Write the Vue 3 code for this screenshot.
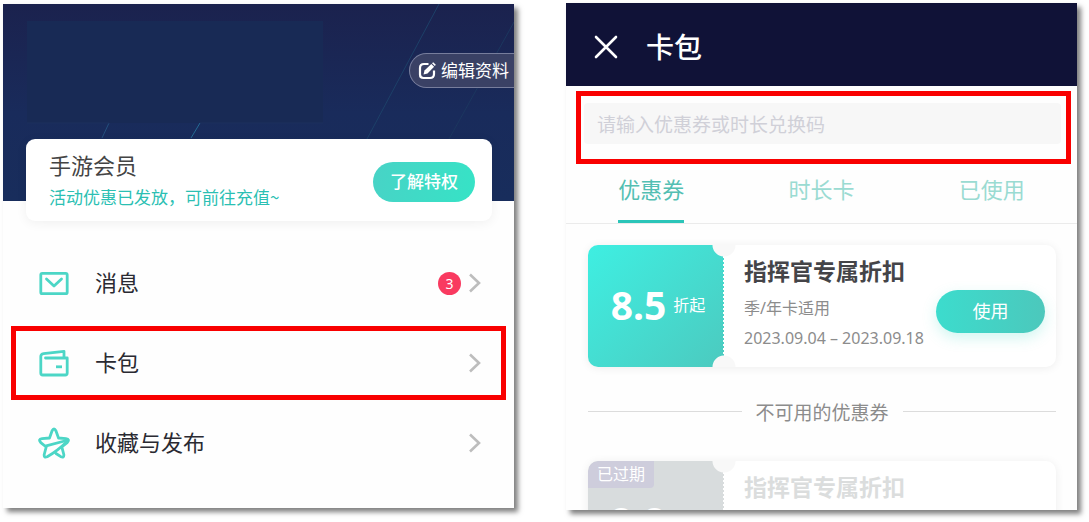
<script setup>
import { ref } from 'vue'

const menu = [
  { id: 'message', label: '消息', badge: 3 },
  { id: 'wallet', label: '卡包', marked: true },
  { id: 'star', label: '收藏与发布' },
]
const tabs = ['优惠券', '时长卡', '已使用']
const active = ref(0)
const code = ref('')
</script>

<template>
  <main class="page">
    <section class="panel profile">
      <header class="hero">
        <svg class="hero-art" viewBox="0 0 511 197" preserveAspectRatio="none" aria-hidden="true">
          <rect x="24" y="17" width="296" height="102" fill="#182a55" />
          <g fill="none" stroke-width="1">
            <path d="M436 0 364 135" stroke="#1d4068" />
            <path d="M511 18 446 135" stroke="#1c375f" />
            <path d="M106 119 99 134" stroke="#24507e" />
            <path d="M197 119 188 134" stroke="#246a94" />
            <path d="M24 119H106M197 119H320" stroke="#1c315f" />
          </g>
        </svg>
        <button class="edit" type="button">
          <svg width="18" height="18" viewBox="0 0 18 18" aria-hidden="true">
            <path d="M10.500 2H6Q2 2 2 6v6.500q0 3.500 3.500 3.500h6.500q4 0 4-4V8.500" fill="none" stroke="#fff" stroke-width="2.200" />
            <path d="m5.500 12.500 1-4 6.800-6.600 2.800 2.800-6.600 6.800z" fill="#fff" />
            <path d="m14 1.200 1.200-1 2.600 2.600-1 1.200z" fill="#fff" />
          </svg>
          <span>编辑资料</span>
        </button>
      </header>

      <div class="member">
        <div>
          <h2>手游会员</h2>
          <p>活动优惠已发放，可前往充值~</p>
        </div>
        <button type="button">了解特权</button>
      </div>

      <nav class="menu">
        <a v-for="item in menu" :key="item.id" href="#" :class="{ marked: item.marked }">
          <svg class="icon" width="32" height="32" viewBox="0 0 32 32" fill="none" stroke="#4cd6c6" stroke-width="2.800" stroke-linejoin="round" stroke-linecap="round" aria-hidden="true">
            <template v-if="item.id === 'message'">
              <rect x="2.800" y="6.300" width="26.400" height="20.400" rx="1.500" />
              <path d="m8.500 12 7.500 7 7.500-7" />
            </template>
            <template v-else-if="item.id === 'wallet'">
              <path d="M26 11V4.300L5.500 6.600Q2.800 7 2.800 9.600V26q0 2 2 2h22.400q2 0 2-2V11H7.500" />
              <path d="M18 19.800h6" stroke-linecap="butt" />
            </template>
            <template v-else>
              <path d="M11.500 11 14 4q2-4 4 0l2.500 7 7.500.6q4.200.6 1.200 4l-5.400 4.200 2 7.700q.4 3.600-3 2.200L18 26.500M11.500 11 4 11.600q-4.200.6-1.200 4L8.200 20l-2 7.500q-.4 3.600 3 2.200Q19.500 24 29 14.500" />
              <path d="M8.200 18.800 28.500 13.500" />
            </template>
          </svg>
          <span class="label">{{ item.label }}</span>
          <span v-if="item.badge" class="badge">{{ item.badge }}</span>
          <svg width="14" height="20" viewBox="0 0 14 20" aria-hidden="true">
            <path d="m2 1.500 9 8.500-9 8.500" fill="none" stroke="#bdbdbd" stroke-width="2.600" />
          </svg>
        </a>
      </nav>
    </section>

    <section class="panel cards">
      <div class="screen">
        <header class="bar">
          <button type="button" aria-label="关闭">
            <svg width="24" height="24" viewBox="0 0 24 24" aria-hidden="true">
              <path d="m2 2 20 20M22 2 2 22" stroke="#fff" stroke-width="2.600" stroke-linecap="round" />
            </svg>
          </button>
          <h1>卡包</h1>
        </header>

        <div class="redeem">
          <input v-model="code" type="text" aria-label="兑换码" placeholder="请输入优惠券或时长兑换码" />
        </div>

        <div class="tabs" role="tablist">
          <button v-for="(tab, i) in tabs" :key="tab" type="button" role="tab" :aria-selected="i === active" @click="active = i">
            <span>{{ tab }}</span>
          </button>
        </div>

        <article class="coupon">
          <div class="stub"><strong>8.5</strong><span>折起</span></div>
          <div class="info">
            <h3>指挥官专属折扣</h3>
            <p>季/年卡适用</p>
            <p>2023.09.04 – 2023.09.18</p>
          </div>
          <button class="use" type="button">使用</button>
        </article>

        <div class="divider">不可用的优惠券</div>

        <article class="coupon expired">
          <div class="stub"><em>已过期</em><strong>8.8</strong></div>
          <div class="info">
            <h3>指挥官专属折扣</h3>
          </div>
        </article>
      </div>
    </section>
  </main>
</template>

<style>
body {
  background: #fff;
}
</style>

<style scoped>
.page,
.page * {
  box-sizing: border-box;
}
.page {
  display: grid;
  grid-template-columns: 1fr 1fr;
  grid-template-rows: minmax(0, 1fr);
  gap: 52px;
  height: 100vh;
  padding: 3px 12px 12px 3px;
  font-family: "Noto Sans CJK SC", sans-serif;
  overflow: hidden;
}
h1, h2, h3, p {
  margin: 0;
  font-weight: 400;
}
button, input {
  font-family: inherit;
  border: 0;
  padding: 0;
  margin: 0;
  background: none;
}
.panel {
  min-width: 0;
  min-height: 0;
  background: #fefefe;
  box-shadow: 4px 4px 5px rgba(0, 0, 0, 0.5);
}
.profile {
  margin: 1px 0 2px;
}
.screen {
  display: flex;
  flex-direction: column;
  height: 100%;
  overflow: hidden;
}
.hero {
  position: relative;
  display: flex;
  justify-content: flex-end;
  align-items: flex-start;
  height: 197px;
  padding-top: 49px;
  background: linear-gradient(#1b224e, #192b5b 55%, #182d5c);
}
.hero-art {
  position: absolute;
  inset: 0;
  width: 100%;
  height: 100%;
}
.edit {
  position: relative;
  display: flex;
  align-items: center;
  gap: 5px;
  height: 35px;
  padding: 0 5px 0 8px;
  border: 1px solid #777d9c;
  border-right: 0;
  border-radius: 18px 0 0 18px;
  background: #3a4165;
  color: #fff;
  font-size: 17px;
}
.edit span {
  padding-bottom: 2px;
}
.member {
  position: relative;
  display: flex;
  align-items: center;
  justify-content: space-between;
  margin: -62px 22px 0 23px;
  height: 82px;
  padding: 3px 17px 0 23px;
  border-radius: 9px;
  background: #fff;
  box-shadow: 0 2px 12px rgba(0, 0, 0, 0.06);
}
.member div {
  padding-bottom: 3px;
}
.member h2 {
  font-size: 22px;
  line-height: 34px;
  color: #444;
}
.member p {
  font-size: 17px;
  line-height: 32px;
  color: #2bbfb3;
}
.member button {
  width: 102px;
  height: 40px;
  padding-bottom: 2px;
  border-radius: 20px;
  background: linear-gradient(100deg, #48d3c6, #36e3c6);
  color: #fff;
  font-size: 17px;
  font-weight: 500;
}
.menu {
  display: flex;
  flex-direction: column;
  gap: 6px;
  margin: 25px 8px 0;
}
.menu a {
  display: flex;
  align-items: center;
  height: 74px;
  padding: 0 19px 0 22px;
  border: 5px solid transparent;
  color: #2a2a32;
  text-decoration: none;
  font-size: 22px;
}
.menu a.marked {
  border-color: #f90000;
}
.label {
  flex: 1;
  margin-left: 25px;
  padding-bottom: 4px;
}
.badge {
  width: 23px;
  height: 23px;
  margin-right: 7px;
  border-radius: 50%;
  background: #f93a60;
  color: #fff;
  font: 14px/23px "Noto Sans", sans-serif;
  text-align: center;
}
.bar {
  flex: none;
  display: flex;
  align-items: center;
  gap: 28px;
  height: 83px;
  padding: 4px 28px 0;
  background: #101237;
  color: #fff;
}
.bar button {
  height: 24px;
}
.bar svg {
  display: block;
}
.bar h1 {
  font-size: 28px;
  line-height: 40px;
  font-weight: 500;
  padding-bottom: 2px;
}
.redeem {
  flex: none;
  margin: 5px 6px 0 10px;
  padding: 7px 5px 15px 3px;
  border: 5px solid #f90000;
}
.redeem input {
  display: block;
  width: 100%;
  height: 41px;
  padding: 0 13px;
  border-radius: 4px;
  background: #f7f7f7;
  font-size: 19px;
}
.redeem input::placeholder {
  color: #d0d0d8;
  opacity: 1;
}
.tabs {
  flex: none;
  display: grid;
  grid-template-columns: repeat(3, 1fr);
  height: 60px;
  border-bottom: 1px solid #ebebeb;
}
.tabs button {
  color: #9adbd2;
  font-size: 22px;
  line-height: 48px;
}
.tabs span {
  display: inline-block;
  height: 59px;
}
.tabs [aria-selected="true"] {
  color: #53bfb3;
}
.tabs [aria-selected="true"] span {
  border-bottom: 3px solid #2bc5b9;
}
.coupon {
  position: relative;
  flex: none;
  display: flex;
  align-items: center;
  height: 122px;
  margin: 21px 21px 0 22px;
  padding-right: 11px;
  border-radius: 10px;
  background: #fff;
  box-shadow: 0 1px 10px rgba(0, 0, 0, 0.07);
}
.coupon::before {
  content: "";
  position: absolute;
  z-index: 1;
  top: 0;
  bottom: 0;
  left: 124px;
  width: 24px;
  background:
    radial-gradient(circle at 50% 0, #f8f8f8 11px, transparent 12px),
    radial-gradient(circle at 50% 100%, #f8f8f8 11px, transparent 12px);
}
.stub {
  position: relative;
  flex: none;
  display: flex;
  align-items: center;
  justify-content: center;
  gap: 7px;
  width: 136px;
  height: 100%;
  padding: 0 0 2px 4px;
  border-radius: 10px 0 0 10px;
  background: linear-gradient(135deg, #3eefe2, #4ccabf);
  color: #fff;
  font-size: 16px;
  overflow: hidden;
}
.stub::after {
  content: "";
  position: absolute;
  top: 11px;
  bottom: 11px;
  right: 0;
  width: 1px;
  background: repeating-linear-gradient(#fff 0 2px, transparent 2px 4px);
}
.stub strong {
  font: 700 39px/54px "Noto Sans", sans-serif;
}
.stub span {
  padding-bottom: 2px;
}
.stub em {
  position: absolute;
  top: 0;
  left: 0;
  padding: 0 9px 2px;
  border-radius: 10px 0 4px 0;
  background: #cecddc;
  font-size: 16px;
  font-style: normal;
  line-height: 25px;
}
.info {
  flex: 1;
  min-width: 0;
  margin-left: 20px;
  align-self: flex-start;
  padding-top: 8px;
  white-space: nowrap;
}
.info h3 {
  color: #444448;
  font-size: 23px;
  font-weight: 700;
  line-height: 34px;
}
.info p {
  color: #8c8c8c;
  font-family: "Noto Sans", "Noto Sans CJK SC", sans-serif;
  font-size: 16px;
  line-height: 30px;
  margin-top: 6px;
}
.info p + p {
  margin-top: 0;
}
.use {
  flex: none;
  width: 109px;
  height: 43px;
  margin-top: 11px;
  padding-bottom: 3px;
  border-radius: 22px;
  background: linear-gradient(90deg, #3cdccd, #4cc8bc);
  box-shadow: 0 5px 14px rgba(70, 220, 200, 0.25);
  color: #fff;
  font-size: 18px;
}
.divider {
  flex: none;
  display: flex;
  align-items: center;
  gap: 14px;
  height: 30px;
  margin: 29px 21px 0 22px;
  color: #8c8c8c;
  font-size: 19px;
}
.divider::before,
.divider::after {
  content: "";
  flex: 1;
  height: 1px;
  background: #dcdcdc;
}
.expired {
  margin-top: 35px;
}
.expired .stub {
  justify-content: flex-start;
  padding-left: 22px;
  background: #d8dcdd;
}
.expired h3 {
  color: #dbdddd;
}
</style>
